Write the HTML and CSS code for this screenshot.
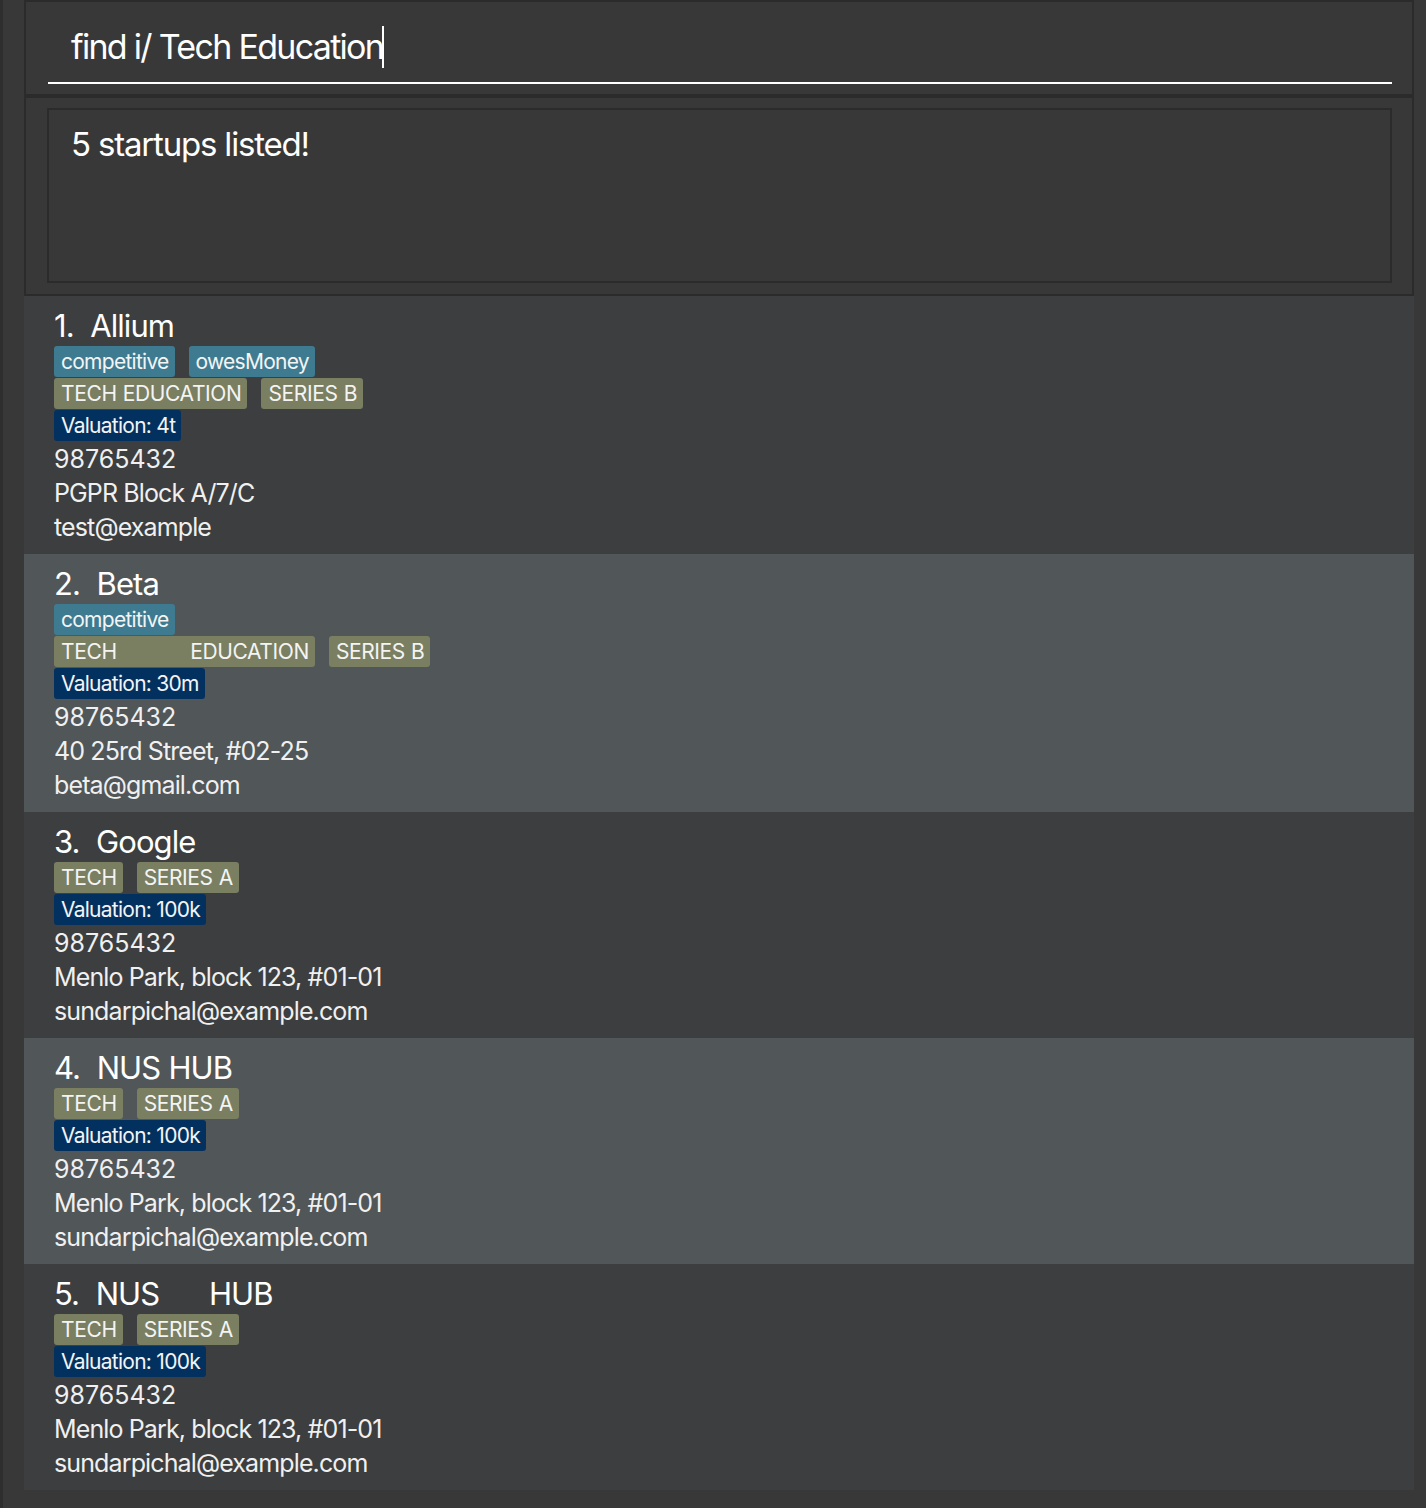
FILE: index.html
```html
<!DOCTYPE html>
<html>
<head>
<meta charset="utf-8">
<link rel="stylesheet" href="styles.css">
</head>
<body>
<div class="app">
  <div class="panel command-panel">
    <div class="command-field"><span class="command-text">find i/ Tech Education</span><span class="caret"></span></div>
  </div>
  <div class="panel result-panel">
    <div class="result-box">5 startups listed!</div>
  </div>
  <div class="list">
    <div class="card even">
      <div class="title">1.&nbsp;&nbsp;Allium</div>
      <div class="tags"><span class="tag tag-blue">competitive</span><span class="tag tag-blue">owesMoney</span></div>
      <div class="tags"><span class="tag tag-olive">TECH EDUCATION</span><span class="tag tag-olive">SERIES B</span></div>
      <div class="tags"><span class="tag tag-navy">Valuation: 4t</span></div>
      <div class="line phone">98765432</div>
      <div class="line">PGPR Block A/7/C</div>
      <div class="line">test@example</div>
    </div>
    <div class="card odd">
      <div class="title">2.&nbsp;&nbsp;Beta</div>
      <div class="tags"><span class="tag tag-blue">competitive</span></div>
      <div class="tags"><span class="tag tag-olive">TECH            EDUCATION</span><span class="tag tag-olive">SERIES B</span></div>
      <div class="tags"><span class="tag tag-navy">Valuation: 30m</span></div>
      <div class="line phone">98765432</div>
      <div class="line">40 25rd Street, #02-25</div>
      <div class="line">beta@gmail.com</div>
    </div>
    <div class="card even">
      <div class="title">3.&nbsp;&nbsp;Google</div>
      <div class="tags"><span class="tag tag-olive">TECH</span><span class="tag tag-olive">SERIES A</span></div>
      <div class="tags"><span class="tag tag-navy">Valuation: 100k</span></div>
      <div class="line phone">98765432</div>
      <div class="line">Menlo Park, block 123, #01-01</div>
      <div class="line">sundarpichal@example.com</div>
    </div>
    <div class="card odd">
      <div class="title">4.&nbsp;&nbsp;NUS HUB</div>
      <div class="tags"><span class="tag tag-olive">TECH</span><span class="tag tag-olive">SERIES A</span></div>
      <div class="tags"><span class="tag tag-navy">Valuation: 100k</span></div>
      <div class="line phone">98765432</div>
      <div class="line">Menlo Park, block 123, #01-01</div>
      <div class="line">sundarpichal@example.com</div>
    </div>
    <div class="card even">
      <div class="title pre">5.  NUS      HUB</div>
      <div class="tags"><span class="tag tag-olive">TECH</span><span class="tag tag-olive">SERIES A</span></div>
      <div class="tags"><span class="tag tag-navy">Valuation: 100k</span></div>
      <div class="line phone">98765432</div>
      <div class="line">Menlo Park, block 123, #01-01</div>
      <div class="line">sundarpichal@example.com</div>
    </div>
  </div>
</div>
</body>
</html>
```

FILE: styles.css
```css
* { box-sizing: border-box; }

html, body {
  margin: 0;
  padding: 0;
  background: #383838;
  height: 100%;
}

body {
  border-left: 3px solid #2e2e2e;
  font-family: Inter, "Noto Sans", sans-serif;
  color: #ffffff;
}

.app {
  margin-left: 21px;
  width: 1390px;
  display: flex;
  flex-direction: column;
}

.panel {
  background: #383838;
  border: 2px solid #2b2b2b;
}

.command-panel {
  height: 96px;
  padding: 10px 20px 10px 22px;
}

.command-field {
  height: 72px;
  border-bottom: 2px solid #ffffff;
  padding-left: 23px;
  padding-top: 14px;
  font-size: 34px;
  line-height: 42px;
  white-space: nowrap;
}

.command-text {
  letter-spacing: -0.05em;
}

.caret {
  display: inline-block;
  width: 2px;
  height: 42px;
  background: #ffffff;
  vertical-align: top;
  margin-left: -1px;
}

.result-panel {
  height: 200px;
  padding: 10px 20px 11px 21px;
}

.result-box {
  height: 175px;
  border: 2px solid #2b2b2b;
  padding: 14px 22px;
  font-size: 33px;
  line-height: 40px;
  letter-spacing: -0.036em;
}

.list {
  display: flex;
  flex-direction: column;
}

.card {
  padding: 10px 30px 10px 30px;
  display: flex;
  flex-direction: column;
  align-items: flex-start;
}

.card.even { background: #3c3e3f; }
.card.odd { background: #515658; }

.title {
  font-size: 31px;
  line-height: 40px;
  height: 40px;
  white-space: nowrap;
  letter-spacing: -0.03em;
  word-spacing: 0.5px;
}

.pre { white-space: pre; }

.tags {
  display: flex;
  gap: 14px;
  height: 31px;
  margin-bottom: 1px;
}

.tag {
  display: block;
  height: 31px;
  line-height: 31px;
  padding: 0 6px 0 7px;
  border-radius: 3px;
  font-size: 21px;
  white-space: pre;
  color: #f4f4f4;
  letter-spacing: -0.035em;
}

.tag-blue { background: #3e7b91; }
.tag-olive {
  background: #7a7f62;
  letter-spacing: -0.018em;
  word-spacing: 0.6px;
}
.tag-navy { background: #03315f; }

.line {
  font-size: 25px;
  line-height: 34px;
  height: 34px;
  color: #f0f0f0;
  white-space: nowrap;
  letter-spacing: -0.035em;
}

.line.phone {
  letter-spacing: 0;
}
```
